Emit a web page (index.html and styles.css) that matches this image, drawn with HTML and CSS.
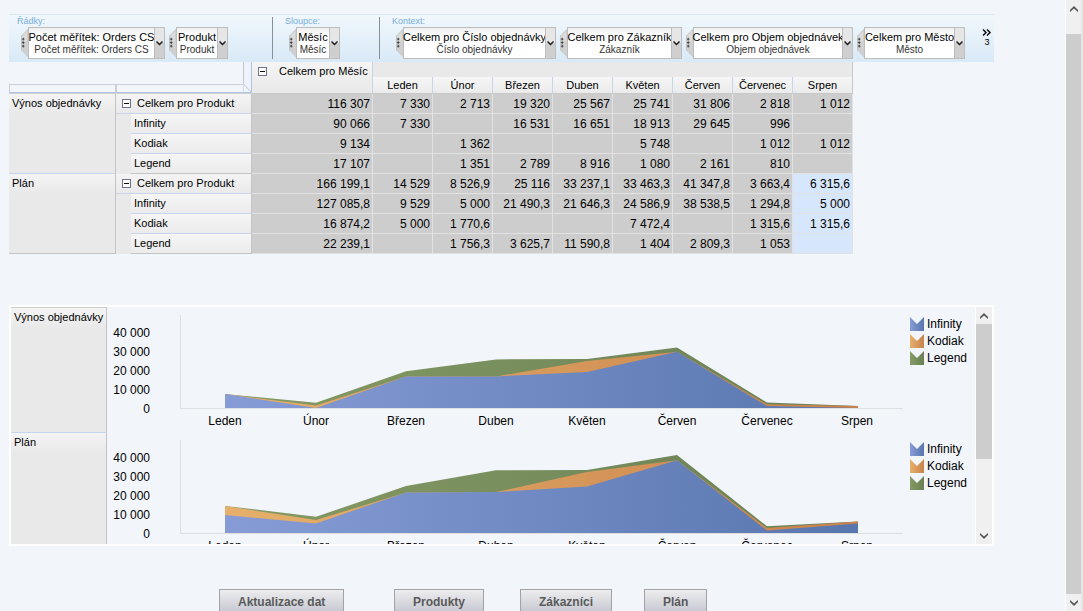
FILE: index.html
```html
<!DOCTYPE html>
<html lang="cs">
<head>
<meta charset="utf-8">
<title>Plán objednávek</title>
<link rel="stylesheet" href="styles.css">
</head>
<body>
<svg class="defs" aria-hidden="true">
  <defs>
    <linearGradient id="blue"><stop offset="0" stop-color="#879cd6"/><stop offset="1" stop-color="#5876ae"/></linearGradient>
    <linearGradient id="orange"><stop offset="0" stop-color="#e6b06c"/><stop offset="1" stop-color="#c9824b"/></linearGradient>
    <linearGradient id="green"><stop offset="0" stop-color="#859a64"/><stop offset="1" stop-color="#698055"/></linearGradient>
    <symbol id="down" viewBox="0 0 7 5"><path d="M.5 .5 3.500 3.500 6.500 .5" fill="none" stroke="#1c1c1c" stroke-width="1.500"/></symbol>
    <symbol id="grip" viewBox="0 0 8 32"><path d="M8 .5 .5 8v16L8 31.5z" fill="#dcdcdc" stroke="#bdbdbd"/><path d="M1 14h7v17L1 24z" fill="#cfcfcf"/><path d="M1 11h3v1H1zM2 10h1v3H2zM1 15h3v1H1zM2 14h1v3H2zM1 19h3v1H1zM2 18h1v3H2z" fill="#333"/></symbol>
    <symbol id="minus" viewBox="0 0 9 9"><rect x=".5" y=".5" width="8" height="8" fill="#fff" stroke="#70708f"/><path d="M2 4h5v1H2z" fill="#111"/></symbol>
    <symbol id="scroll-up" viewBox="0 0 8 6"><path d="M4 0 8 4v2L4 2.400 0 6V4z"/></symbol>
    <symbol id="scroll-down" viewBox="0 0 8 6"><path d="M4 6 8 2V0L4 3.600 0 0v2z"/></symbol>
    <symbol id="swatch" viewBox="0 0 14 14"><path d="M0 0l7 7 7-7v14H0z"/></symbol>
  </defs>
</svg>

<main class="page">
  <section class="toolbar" aria-label="Dimenze">
    <div class="group rows">
      <span class="group-label">Řádky:</span>
      <div class="chips">
        <div class="chip w-measure"><svg class="grip"><use href="#grip"/></svg><div class="chip-text"><b>Počet měřítek: Orders CS</b><small>Počet měřítek: Orders CS</small></div><button class="chip-open" aria-label="Počet měřítek"><svg><use href="#down"/></svg></button></div>
        <div class="chip w-product"><svg class="grip"><use href="#grip"/></svg><div class="chip-text"><b>Produkt</b><small>Produkt</small></div><button class="chip-open" aria-label="Produkt"><svg><use href="#down"/></svg></button></div>
      </div>
    </div>
    <div class="group columns">
      <span class="group-label">Sloupce:</span>
      <div class="chips">
        <div class="chip w-month"><svg class="grip"><use href="#grip"/></svg><div class="chip-text"><b>Měsíc</b><small>Měsíc</small></div><button class="chip-open" aria-label="Měsíc"><svg><use href="#down"/></svg></button></div>
      </div>
    </div>
    <div class="group context">
      <span class="group-label">Kontext:</span>
      <div class="chips">
        <div class="chip w-order"><svg class="grip"><use href="#grip"/></svg><div class="chip-text"><b>Celkem pro Číslo objednávky</b><small>Číslo objednávky</small></div><button class="chip-open" aria-label="Číslo objednávky"><svg><use href="#down"/></svg></button></div>
        <div class="chip w-customer"><svg class="grip"><use href="#grip"/></svg><div class="chip-text"><b>Celkem pro Zákazník</b><small>Zákazník</small></div><button class="chip-open" aria-label="Zákazník"><svg><use href="#down"/></svg></button></div>
        <div class="chip w-volume"><svg class="grip"><use href="#grip"/></svg><div class="chip-text"><b>Celkem pro Objem objednávek</b><small>Objem objednávek</small></div><button class="chip-open" aria-label="Objem objednávek"><svg><use href="#down"/></svg></button></div>
        <div class="chip w-city"><svg class="grip"><use href="#grip"/></svg><div class="chip-text"><b>Celkem pro Město</b><small>Město</small></div><button class="chip-open" aria-label="Město"><svg><use href="#down"/></svg></button></div>
      </div>
    </div>
    <button class="more" aria-label="Další dimenze: 3"><svg viewBox="0 0 9 7"><path d="M.5.5l3 3-3 3M4.500.5l3 3-3 3" fill="none" stroke="#111" stroke-width="1.500"/></svg><span>3</span></button>
  </section>

  <table class="pivot">
    <colgroup><col class="c-measure"><col class="c-product"><col class="c-total"><col span="8" class="c-month"></colgroup>
    <thead>
      <tr class="head-top">
        <td class="corner" colspan="2" rowspan="2"><div class="corner-grid"><i class="bar"></i><i class="bar"></i><svg viewBox="0 0 9 31"><path d="M.5 0v22L8.500 30.500V0" fill="#eef2f9" stroke="#c3c8d2"/><path d="M8.500 0v30" stroke="#b0c4e4"/><path d="M0 22.500V30.500H8.500" fill="none" stroke="#b0c4e4"/></svg></div></td>
        <th class="total-head" rowspan="2"><div class="total-label"><button class="toggle" aria-label="Sbalit Měsíc"><svg><use href="#minus"/></svg></button>Celkem pro Měsíc</div></th>
        <td class="band" colspan="8"></td>
      </tr>
      <tr class="months"><th>Leden</th><th>Únor</th><th>Březen</th><th>Duben</th><th>Květen</th><th>Červen</th><th>Červenec</th><th>Srpen</th></tr>
    </thead>
    <tbody>
      <tr><th class="measure" rowspan="4">Výnos objednávky</th><th class="sum"><div><button class="toggle" aria-label="Sbalit Produkt"><svg><use href="#minus"/></svg></button>Celkem pro Produkt</div></th><td>116 307</td><td>7 330</td><td>2 713</td><td>19 320</td><td>25 567</td><td>25 741</td><td>31 806</td><td>2 818</td><td>1 012</td></tr>
      <tr><th class="leaf"><div>Infinity</div></th><td>90 066</td><td>7 330</td><td></td><td>16 531</td><td>16 651</td><td>18 913</td><td>29 645</td><td>996</td><td></td></tr>
      <tr><th class="leaf"><div>Kodiak</div></th><td>9 134</td><td></td><td>1 362</td><td></td><td></td><td>5 748</td><td></td><td>1 012</td><td>1 012</td></tr>
      <tr><th class="leaf last"><div>Legend</div></th><td>17 107</td><td></td><td>1 351</td><td>2 789</td><td>8 916</td><td>1 080</td><td>2 161</td><td>810</td><td></td></tr>
    </tbody>
    <tbody>
      <tr><th class="measure final" rowspan="4">Plán</th><th class="sum"><div><button class="toggle" aria-label="Sbalit Produkt"><svg><use href="#minus"/></svg></button>Celkem pro Produkt</div></th><td>166 199,1</td><td>14 529</td><td>8 526,9</td><td>25 116</td><td>33 237,1</td><td>33 463,3</td><td>41 347,8</td><td>3 663,4</td><td class="open">6 315,6</td></tr>
      <tr><th class="leaf"><div>Infinity</div></th><td>127 085,8</td><td>9 529</td><td>5 000</td><td>21 490,3</td><td>21 646,3</td><td>24 586,9</td><td>38 538,5</td><td>1 294,8</td><td class="open">5 000</td></tr>
      <tr><th class="leaf"><div>Kodiak</div></th><td>16 874,2</td><td>5 000</td><td>1 770,6</td><td></td><td></td><td>7 472,4</td><td></td><td>1 315,6</td><td class="open">1 315,6</td></tr>
      <tr><th class="leaf last"><div>Legend</div></th><td>22 239,1</td><td></td><td>1 756,3</td><td>3 625,7</td><td>11 590,8</td><td>1 404</td><td>2 809,3</td><td>1 053</td><td class="open"></td></tr>
    </tbody>
  </table>

  <section class="charts" aria-label="Grafy">
    <div class="chart-list">
      <div class="chart-row">
        <h2>Výnos objednávky</h2>
        <svg class="chart" viewBox="107 307 868 125" preserveAspectRatio="xMinYMin">
          <path class="axis" d="M180.500 315v93.500H903"/>
          <path fill="url(#green)" d="M225 394.100 316 402.800 406 371.300 496 359.400 587 359.100 677 347.600 767 402.600 858 406.100V408H225z"/>
          <path fill="url(#orange)" d="M225 394.100 316 405.400 406 376.600 496 376.400 587 361.100 677 351.700 767 404.200 858 406.100V408H225z"/>
          <path fill="url(#blue)" d="M225 394.100 316 408 406 376.600 496 376.400 587 372.100 677 351.700 767 406.100 858 408H225z"/>
          <g class="ticks"><text x="150" y="337">40 000</text><text x="150" y="356">30 000</text><text x="150" y="375">20 000</text><text x="150" y="394">10 000</text><text x="150" y="413">0</text></g>
          <g class="cats"><text x="225" y="425">Leden</text><text x="316" y="425">Únor</text><text x="406" y="425">Březen</text><text x="496" y="425">Duben</text><text x="587" y="425">Květen</text><text x="677" y="425">Červen</text><text x="767" y="425">Červenec</text><text x="857" y="425">Srpen</text></g>
          <use href="#swatch" x="910" y="317" width="14" height="14" fill="url(#blue)"/><use href="#swatch" x="910" y="334" width="14" height="14" fill="url(#orange)"/><use href="#swatch" x="910" y="351" width="14" height="14" fill="url(#green)"/>
          <text x="927" y="328">Infinity</text><text x="927" y="345">Kodiak</text><text x="927" y="362">Legend</text>
        </svg>
      </div>
      <div class="chart-row">
        <h2>Plán</h2>
        <svg class="chart" viewBox="107 307 868 125" preserveAspectRatio="xMinYMin">
          <path class="axis" d="M180.500 315v93.500H903"/>
          <path fill="url(#green)" d="M225 380.900 316 391.800 406 360.900 496 345.300 587 344.900 677 330 767 401.300 858 396.500V408H225z"/>
          <path fill="url(#orange)" d="M225 380.900 316 395.100 406 367.400 496 367.100 587 347.100 677 335.300 767 403 858 396.500V408H225z"/>
          <path fill="url(#blue)" d="M225 390 316 398.500 406 367.400 496 367.100 587 361.500 677 335.300 767 405.500 858 398.500V408H225z"/>
          <g class="ticks"><text x="150" y="337">40 000</text><text x="150" y="356">30 000</text><text x="150" y="375">20 000</text><text x="150" y="394">10 000</text><text x="150" y="413">0</text></g>
          <g class="cats"><text x="225" y="425">Leden</text><text x="316" y="425">Únor</text><text x="406" y="425">Březen</text><text x="496" y="425">Duben</text><text x="587" y="425">Květen</text><text x="677" y="425">Červen</text><text x="767" y="425">Červenec</text><text x="857" y="425">Srpen</text></g>
          <use href="#swatch" x="910" y="317" width="14" height="14" fill="url(#blue)"/><use href="#swatch" x="910" y="334" width="14" height="14" fill="url(#orange)"/><use href="#swatch" x="910" y="351" width="14" height="14" fill="url(#green)"/>
          <text x="927" y="328">Infinity</text><text x="927" y="345">Kodiak</text><text x="927" y="362">Legend</text>
        </svg>
      </div>
    </div>
    <div class="scrollbar inner">
      <button aria-label="Nahoru"><svg><use href="#scroll-up"/></svg></button>
      <div class="track"><div class="thumb"></div></div>
      <button aria-label="Dolů"><svg><use href="#scroll-down"/></svg></button>
    </div>
  </section>

  <nav class="actions">
    <button>Aktualizace dat</button>
    <button>Produkty</button>
    <button>Zákazníci</button>
    <button>Plán</button>
  </nav>
</main>

<div class="scrollbar outer">
  <button aria-label="Nahoru"><svg><use href="#scroll-up"/></svg></button>
  <div class="track"><div class="thumb"></div></div>
  <button aria-label="Dolů"><svg><use href="#scroll-down"/></svg></button>
</div>
</body>
</html>
```
FILE: styles.css
```css
* { box-sizing: border-box; }

body {
  margin: 0;
  height: 100vh;
  display: flex;
  overflow: hidden;
  background: #f2f5fa;
  color: #000;
  font: 11px/14px "Liberation Sans", Arial, sans-serif;
}

button {
  margin: 0;
  padding: 0;
  border: 0;
  background: none;
  color: inherit;
  font: inherit;
}

.defs { position: absolute; width: 0; height: 0; }

.page {
  flex: 1;
  min-width: 0;
  padding: 14px 71px 0 9px;
  overflow: hidden;
}

/* Dimension toolbar */
.toolbar {
  display: flex;
  height: 48px;
  padding-top: 2px;
  border-top: 1px solid #d9e5ee;
  background: linear-gradient(#f1f8fc, #d8e9f7);
}
.group { height: 42px; }
.group-label {
  display: block;
  height: 10px;
  margin-left: 8px;
  color: #78aeda;
  font-size: 9px;
  line-height: 8px;
}
.rows { width: 263px; }
.columns { width: 107px; }
.columns, .context { border-left: 1px solid #8a9097; }
.columns .group-label, .context .group-label { margin-left: 12px; }
.chips { display: flex; gap: 4px; padding-left: 12px; }
.columns .chips, .context .chips { padding-left: 16px; }
.chip { display: flex; height: 32px; }
.w-measure { width: 144px; }
.w-product { width: 59px; }
.w-month { width: 51px; }
.w-order { width: 160px; }
.w-customer { width: 122px; }
.w-volume { width: 167px; }
.w-city { width: 108px; }
.grip { flex: none; width: 7px; height: 32px; }
.chip-text {
  flex: 1;
  min-width: 0;
  display: flex;
  flex-direction: column;
  align-items: center;
  padding-top: 2px;
  border: 1px solid #bdbdbd;
  border-width: 1px 0 1px 1px;
  background: linear-gradient(#efefef, #fff 8px);
  white-space: nowrap;
}
.chip-text b { font-weight: 400; font-size: 11px; line-height: 14px; }
.chip-text small { color: #333; font-size: 10px; line-height: 11px; }
.chip-open {
  flex: none;
  width: 11px;
  border: 1px solid #bdbdbd;
  background: linear-gradient(#e6e6e6 50%, #cfcfcf 50%);
}
.chip-open svg { display: block; width: 7px; height: 5px; margin: auto; }
.more {
  display: flex;
  flex-direction: column;
  align-items: center;
  align-self: flex-start;
  margin: 12px 0 0 auto;
  padding-right: 2px;
  font-size: 9px;
  line-height: 12px;
}
.more svg { width: 10px; height: 7px; }

/* Pivot table */
.pivot {
  width: 844px;
  table-layout: fixed;
  border-spacing: 0;
}
.c-measure { width: 107px; }
.c-product { width: 136px; }
.c-total { width: 121px; }
.c-month { width: 60px; }
.pivot th, .pivot td { padding: 0; font-weight: 400; }
.pivot tr { height: 20px; }
.pivot .head-top { height: 15px; }
.pivot .months { height: 17px; }
.corner { border-bottom: 1px solid #d0d0d0; }
.corner-grid {
  display: grid;
  grid-template-columns: 107px 127px 9px;
  align-items: end;
  height: 31px;
}
.bar {
  height: 9px;
  border: 1px solid #c9cfda;
  border-bottom-color: #b0c4e4;
}
.bar + .bar { border-right: 0; }
.corner-grid svg { width: 9px; height: 31px; }
.pivot .total-head {
  vertical-align: top;
  border-right: 1px solid #c5d5ee;
  border-bottom: 1px solid #c8c8c8;
  background: linear-gradient(#f4f4f4, #e9e9e9);
}
.total-label { display: flex; align-items: center; gap: 12px; padding: 2px 0 0 6px; }
.toggle { flex: none; width: 9px; height: 9px; }
.toggle svg { display: block; width: 9px; height: 9px; }
.pivot .band { border-right: 1px solid #c8c8c8; background: #e9e9e9; }
.months th {
  border-right: 1px solid #c5d5ee;
  border-bottom: 1px solid #c8c8c8;
  background: linear-gradient(#f6f6f6, #ebebeb);
}
.months th:last-child { border-right-color: #c8c8c8; }
tbody td {
  border-right: 1px solid #e2e2e2;
  border-bottom: 1px solid #e2e2e2;
  background: #cdcdcd;
  text-align: right;
  font-size: 12px;
}
.pivot tbody td { padding-right: 2px; }
tbody .open { background: #d6e6fd; }
tbody th {
  text-align: left;
  border-right: 1px solid #c4c4c4;
}
.pivot .measure {
  padding: 2px 0 0 3px;
  vertical-align: top;
  border-bottom: 1px solid #c9d5ea;
  background: linear-gradient(#f4f4f4, #e9e9e9 20px);
  white-space: nowrap;
}
.pivot .final { border-bottom-color: #c4c4c4; }
.sum { background: linear-gradient(#f4f4f4, #e9e9e9); }
.sum div {
  display: flex;
  align-items: center;
  gap: 6px;
  height: 20px;
  padding: 0 0 1px 6px;
  border-bottom: 1px solid #c9d5ea;
}
.leaf { background: #e9e9e9; }
.leaf div {
  height: 20px;
  margin-left: 15px;
  padding: 2px 0 0 3px;
  border-bottom: 1px solid #c9d5ea;
  background: linear-gradient(#f6f6f6, #ebebeb);
}
.last div { border-bottom-color: #c4c4c4; }

/* Charts */
.charts {
  display: flex;
  height: 241px;
  margin-top: 51px;
  border: 2px solid #fff;
}
.chart-list { flex: 1; min-width: 0; overflow: hidden; }
.chart-row { display: flex; height: 125px; }
.chart-row h2 {
  flex: none;
  width: 96px;
  margin: 0;
  padding: 2px 0 0 3px;
  border-top: 1px solid #cfcfcf;
  border-right: 1px solid #c4c4c4;
  background: linear-gradient(#f4f4f4, #e9e9e9 20px);
  font-size: 11px;
  font-weight: 400;
  white-space: nowrap;
}
.chart-row + .chart-row h2 { border-top-color: #c5d5ee; }
.chart { flex: none; width: 868px; height: 125px; font-size: 12px; }
.axis { fill: none; stroke: #dedfe1; }
.ticks { text-anchor: end; }
.cats { text-anchor: middle; }

/* Scrollbars */
.scrollbar {
  flex: none;
  display: flex;
  flex-direction: column;
  width: 17px;
  border-left: 1px solid #fff;
  background: #f0f0f0;
}
.scrollbar button { flex: none; height: 17px; }
.scrollbar button svg { display: block; width: 8px; height: 6px; margin: auto; fill: #555; }
.track { flex: 1; }
.thumb { background: #cdcdcd; }
.inner .thumb { height: 135px; }
.outer { width: 18px; border-right: 2px solid #e6e6e6; }
.outer .track { display: flex; flex-direction: column; padding-top: 17px; }
.outer .thumb { flex: 1; }

/* Bottom actions */
.actions {
  display: grid;
  grid-template-columns: 175px 126px 124px auto;
  justify-items: start;
  margin: 43px 0 0 210px;
}
.actions button {
  height: 26px;
  padding: 0 18px;
  border: 1px solid #a0a2a6;
  background: linear-gradient(#ededee, #c3c5d0);
  color: #5a5a5a;
  font-size: 12px;
  font-weight: 700;
}
```
